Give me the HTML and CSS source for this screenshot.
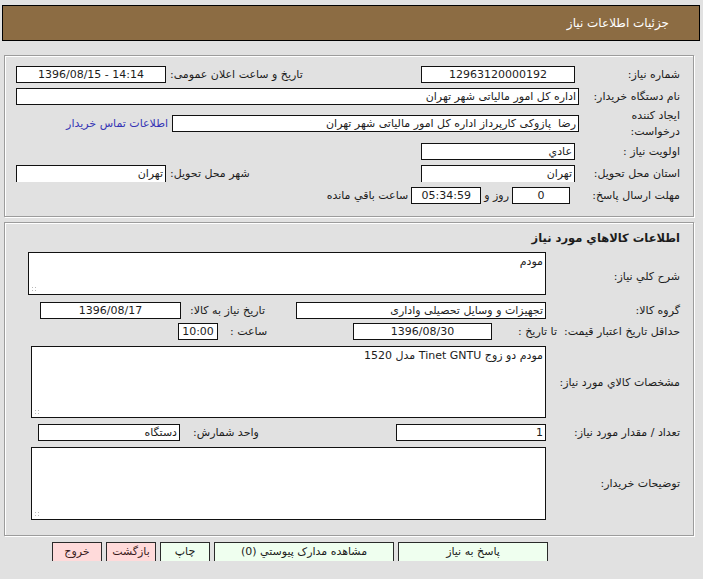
FILE: index.html
```html
<!DOCTYPE html>
<html lang="fa" dir="rtl">
<head>
<meta charset="utf-8">
<title>جزئیات اطلاعات نیاز</title>
<link rel="stylesheet" href="styles.css">
</head>
<body>
<div class="page">
  <div class="header">جزئیات اطلاعات نیاز</div>

  <div class="panel panel-main">
    <div class="grid">
      <div class="lbl">شماره نیاز:</div>
      <div class="box w154 center to-left">12963120000192</div>
      <div class="lbl2">تاریخ و ساعت اعلان عمومی:</div>
      <div class="box w150 center ltr">1396/08/15 - 14:14</div>

      <div class="lbl">نام دستگاه خریدار:</div>
      <div class="box span3">اداره کل امور مالیاتی شهر تهران</div>

      <div class="lbl two">ایجاد کننده<br>درخواست:</div>
      <div class="span3 inline">
        <div class="box w407">رضا&nbsp; پازوکی کارپرداز اداره کل امور مالیاتی شهر تهران</div>
        <a class="link" href="#">اطلاعات تماس خریدار</a>
      </div>

      <div class="lbl">اولویت نیاز :</div>
      <div class="box w154 to-left">عادي</div>
      <div></div>
      <div></div>

      <div class="lbl">استان محل تحویل:</div>
      <div class="box w154 to-left open">تهران</div>
      <div class="lbl2">شهر محل تحویل:</div>
      <div class="box w150 open">تهران</div>

      <div class="lbl">مهلت ارسال پاسخ:</div>
      <div class="span3 inline">
        <div class="box w58 center days">0</div>
        <span class="txt">روز و</span>
        <div class="box w70 center">05:34:59</div>
        <span class="txt">ساعت باقي مانده</span>
      </div>
    </div>
  </div>

  <div class="panel panel-goods">
    <div class="title">اطلاعات کالاهاي مورد نياز</div>

    <div class="row row-b">
      <div class="l1">شرح کلي نياز:</div>
      <div class="ta ta-b">مودم</div>
    </div>

    <div class="row row-c">
      <div class="l1">گروه کالا:</div>
      <div class="box w250">تجهیزات و وسایل تحصیلی واداری</div>
      <div class="l2 pad9">تاريخ نياز به کالا:</div>
      <div class="box w141 center ml13">1396/08/17</div>
    </div>

    <div class="row row-d">
      <div class="l1 wide">حداقل تاريخ اعتبار قيمت:&nbsp; تا تاريخ :</div>
      <div class="box w139 center">1396/08/30</div>
      <div class="l2 pad12">ساعت :</div>
      <div class="box w40 center ml151">10:00</div>
    </div>

    <div class="row row-e">
      <div class="l1">مشخصات کالاي مورد نياز:</div>
      <div class="ta ta-e">مودم دو زوج Tinet GNTU مدل 1520</div>
    </div>

    <div class="row row-f">
      <div class="l1">تعداد / مقدار مورد نياز:</div>
      <div class="box w150">1</div>
      <div class="l2 pad13">واحد شمارش:</div>
      <div class="box w142 ml11">دستگاه</div>
    </div>

    <div class="row row-g">
      <div class="l1">توضيحات خريدار:</div>
      <div class="ta ta-g"></div>
    </div>
  </div>

  <div class="actions">
    <div class="btn green w150b">پاسخ به نياز</div>
    <div class="btn green w180b">مشاهده مدارک پيوستي (0)</div>
    <div class="btn green w50b">چاپ</div>
    <div class="btn pink w50b">بازگشت</div>
    <div class="btn pink w50b">خروج</div>
  </div>
</div>
</body>
</html>
```

FILE: styles.css
```css
html, body {
  margin: 0;
  padding: 0;
}

body {
  background: #e1e1e1;
  font-family: "DejaVu Sans", Tahoma, sans-serif;
  font-size: 11px;
  color: #1c1c1c;
  direction: rtl;
}

.page {
  padding-top: 5px;
}

.header {
  margin: 0 3px 0 2px;
  height: 36px;
  box-sizing: border-box;
  background: #8c6c43;
  border: 1px solid #000;
  color: #fff;
  font-size: 12px;
  display: flex;
  align-items: center;
  padding-right: 30px;
}

.panel {
  margin: 0 9px 0 4px;
  border: 1px solid #9c9c9c;
  box-shadow: inset 1px 1px 0 #fff, 1px 1px 0 #fff;
}

.panel-main {
  margin-top: 14px;
  padding: 7px 13px 10px 11px;
}

.grid {
  display: grid;
  grid-template-columns: 101px 158px 1fr 150px;
  grid-template-rows: 22px 22px 33px 22px 22px 22px;
  align-items: center;
}

.lbl {
  text-align: right;
  white-space: nowrap;
}

.lbl.two {
  line-height: 16px;
}

.lbl2 {
  text-align: left;
  padding-left: 4px;
  white-space: nowrap;
}

.box {
  height: 17px;
  box-sizing: border-box;
  border: 1px solid #111;
  background: #fff;
  line-height: 15px;
  padding: 0 2px;
  white-space: nowrap;
  overflow: hidden;
}

.box.open {
  border-bottom: 0;
}

.center {
  text-align: center;
}

.ltr {
  direction: ltr;
}

.to-left {
  justify-self: end;
}

.span3 {
  grid-column: span 3;
}

.inline {
  display: flex;
  align-items: center;
}

.link {
  color: #3535b5;
  text-decoration: none;
  margin-right: 4px;
  white-space: nowrap;
}

.txt {
  margin: 0 3px;
  white-space: nowrap;
}

.days {
  margin-right: 9px;
}

.w154 { width: 154px; }
.w150 { width: 150px; }
.w407 { width: 407px; }
.w58 { width: 58px; }
.w70 { width: 70px; }
.w250 { width: 250px; }
.w141 { width: 141px; }
.w139 { width: 139px; }
.w40 { width: 40px; }
.w142 { width: 142px; }

.panel-goods {
  margin-top: 5px;
  padding: 7px 13px 15px 22px;
}

.title {
  font-weight: bold;
  font-size: 11.5px;
  line-height: 16px;
}

.row {
  display: flex;
  align-items: center;
}

.row .box {
  flex: none;
}

.l1 {
  width: 134px;
  flex: none;
  white-space: nowrap;
}

.l1.wide {
  width: 184px;
  margin-left: 4px;
}

.l2 {
  flex: 1;
  text-align: left;
  white-space: nowrap;
}

.pad9 { padding-left: 9px; }
.pad12 { padding-left: 12px; }
.pad13 { padding-left: 13px; }
.ml13 { margin-left: 13px; }
.ml151 { margin-left: 151px; }
.ml11 { margin-left: 11px; }

.ta {
  position: relative;
  background: #fff;
  border: 1px solid #111;
  box-sizing: border-box;
  padding: 1px 2px;
  line-height: 15px;
}

.ta::after {
  content: "";
  position: absolute;
  left: 2px;
  bottom: 2px;
  width: 6px;
  height: 6px;
  background: radial-gradient(circle, #b8b8b8 0.8px, transparent 1px) 0 0 / 3px 3px;
}

.row-b { margin-top: 6px; }
.ta-b { width: 518px; height: 43px; }
.row-b .l1 { padding-top: 5px; }

.row-c { margin-top: 7px; }
.row-d { margin-top: 4px; }

.row-e { margin-top: 6px; }
.ta-e { width: 515px; height: 72px; margin-left: 3px; }

.row-f { margin-top: 6px; }

.row-g { margin-top: 6px; }
.ta-g { width: 515px; height: 73px; margin-left: 3px; }

.actions {
  display: flex;
  gap: 4px;
  margin-top: 6px;
  height: 19px;
  overflow: hidden;
  padding-right: 155px;
  align-items: flex-start;
}

.btn {
  height: 24px;
  box-sizing: border-box;
  border: 1px solid #2a2a2a;
  text-align: center;
  line-height: 18px;
  white-space: nowrap;
  overflow: hidden;
  flex: none;
}

.green { background: #efffef; }
.pink { background: #ffdada; color: #3a1a1a; }

.w150b { width: 150px; }
.w180b { width: 180px; }
.w50b { width: 50px; }
```
